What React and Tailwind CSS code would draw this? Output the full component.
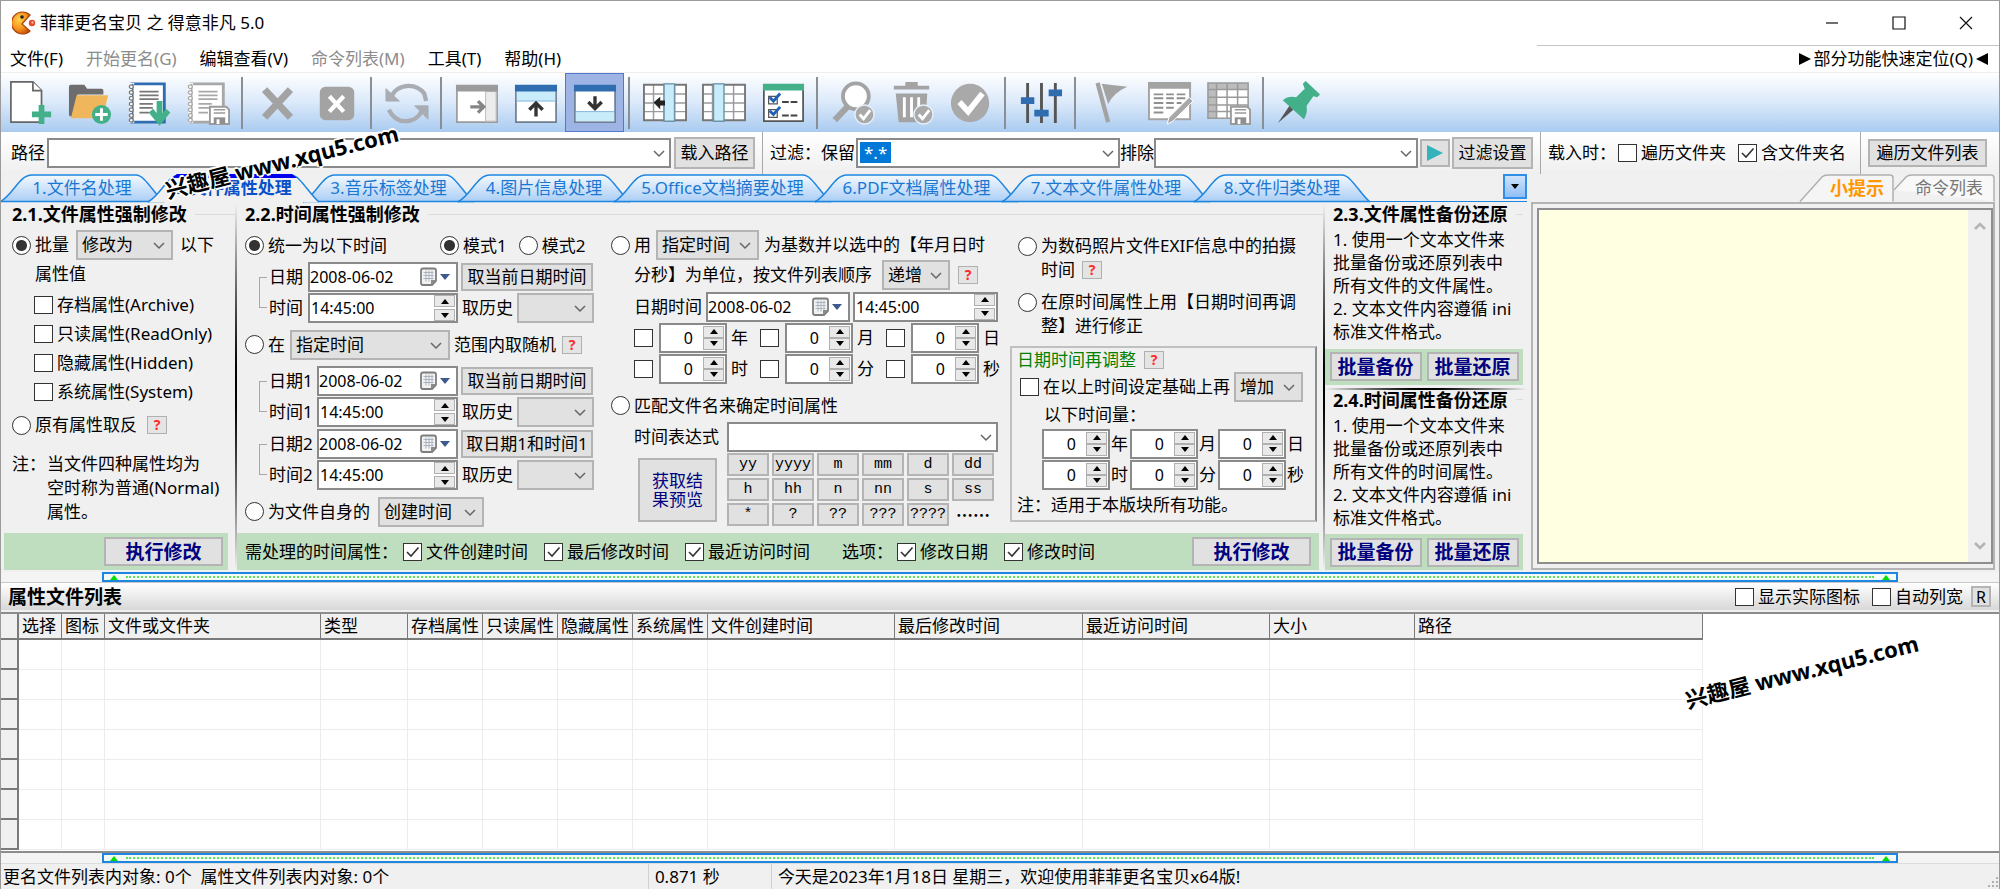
import { useId } from 'react';
import clsx from 'clsx';

/* ---------- small controls ---------- */

function Check({ label, checked = false, className }) {
  return (
    <label className={clsx('flex items-center gap-1 whitespace-nowrap', className)}>
      <span className="relative block h-[18px] w-[19px] shrink-0">
        <input
          type="checkbox"
          aria-label={label ? undefined : '启用'}
          defaultChecked={checked}
          className="peer block h-[18px] w-[19px] appearance-none border border-[#333] bg-white"
        />
        <svg viewBox="0 0 19 18" className="pointer-events-none absolute inset-0 hidden h-[18px] w-[19px] peer-checked:block" fill="none" stroke="#333" strokeWidth="1.6">
          <path d="M4 9l4 4 7.5-8.5" />
        </svg>
      </span>
      {label}
    </label>
  );
}

function Radio({ name, label, checked = false, className, top = false }) {
  return (
    <label className={clsx('flex gap-1 whitespace-nowrap', top ? 'items-start' : 'items-center', className)}>
      <input
        type="radio"
        name={name}
        defaultChecked={checked}
        className={clsx(
          'size-[19px] shrink-0 appearance-none rounded-full border border-[#333] bg-white checked:bg-[radial-gradient(circle,#333_5px,#fff_6px)]',
          top && 'mt-[3px]'
        )}
      />
      <span>{label}</span>
    </label>
  );
}

function Btn({ children, className }) {
  return (
    <button
      type="button"
      className={clsx('flex shrink-0 items-center justify-center border-2 border-[#b4b4b4] bg-[#e1e1e1] whitespace-nowrap', className)}
    >
      {children}
    </button>
  );
}

function Help() {
  return (
    <button
      type="button"
      className="flex h-[18px] w-5 shrink-0 items-center justify-center border border-[#b0b0b0] bg-[#e4e4e4] text-sm leading-4 font-bold text-[#ff2a2a]"
    >
      ?
    </button>
  );
}

function Chevron({ className }) {
  return (
    <svg viewBox="0 0 12 8" className={clsx('pointer-events-none absolute h-2 w-3', className)} fill="none" stroke="#666" strokeWidth="1.5">
      <path d="M1 1l5 5 5-5" />
    </svg>
  );
}

function Select({ value = '', label, className, arrow = 'right-2' }) {
  return (
    <span className={clsx('relative block h-[30px] shrink-0', className)}>
      <select aria-label={label ?? value} className="block h-full w-full appearance-none border-2 border-[#b4b4b4] bg-[#e1e1e1] pl-1 leading-5 text-black">
        <option>{value}</option>
      </select>
      <Chevron className={clsx('top-3', arrow)} />
    </span>
  );
}

function Combo({ label, className, children }) {
  return (
    <span className={clsx('relative block h-[30px]', className)}>
      <input type="text" aria-label={label} className="block h-full w-full border-2 border-[#8a8a8a] bg-white px-1" />
      {children}
      <Chevron className="top-3 right-[6px]" />
    </span>
  );
}

function Spinner({ className, gap = false }) {
  return (
    <span className={clsx('absolute flex flex-col', gap ? 'gap-[2px]' : '', className)}>
      {['增加', '减少'].map((n, i) => (
        <button key={n} type="button" aria-label={n} className="flex h-3 w-[21px] items-center justify-center border border-[#b0b0b0] bg-[#e9e9e9]">
          <svg viewBox="0 0 8 5" className="h-[5px] w-2" fill="#000">
            <path d={i === 0 ? 'M0 5L4 0L8 5Z' : 'M0 0L4 5L8 0Z'} />
          </svg>
        </button>
      ))}
    </span>
  );
}

function NumField({ label }) {
  return (
    <span className="relative block h-[30px] w-[68px] shrink-0">
      <input type="text" aria-label={label} defaultValue="0" className="block h-full w-full border-2 border-[#8a8a8a] bg-white pr-8 text-right text-base" />
      <Spinner className="top-[3px] right-[3px]" />
    </span>
  );
}

function DateField({ label, className }) {
  return (
    <span className={clsx('relative block h-[30px] shrink-0', className)}>
      <input type="text" aria-label={label} defaultValue="2008-06-02" className="block h-full w-full border-2 border-[#8a8a8a] bg-white text-base" />
      <svg viewBox="0 0 30 20" className="absolute top-[5px] right-2 h-5 w-[30px]">
        <path d="M3 1.500h11q2 0 2 2V14l-4 4H3q-2 0-2-2V3.500q0-2 2-2z" fill="#f2f2f2" stroke="#7d7d7d" strokeWidth="1.800" />
        <path d="M3.500 5.500h10M3.500 8.500h10M3.500 11.500h10M6 3.500v11M9 3.500v11M12 3.500v9" stroke="#a9b4c0" strokeWidth="1" />
        <path d="M11 18.500V13h5.500z" fill="#8a8a8a" />
        <path d="M20 7h10l-5 6z" fill="#3d5a8c" />
      </svg>
    </span>
  );
}

function TimeField({ label, className }) {
  return (
    <span className={clsx('relative block h-[30px] shrink-0', className)}>
      <input type="text" aria-label={label} defaultValue="14:45:00" className="block h-full w-full border-2 border-[#8a8a8a] bg-white pl-px text-base" />
      <Spinner gap className="top-[2px] right-[3px]" />
    </span>
  );
}

/* ---------- toolbar icons, all on a 46 x 46 grid ---------- */

const G = '#a3a3a3';

function Floppy() {
  return (
    <>
      <path d="M27 27h15l3 3v15H25V27z" fill="#fff" stroke="#9b9b9b" strokeWidth="2" />
      <path d="M29 30h12M29 33.500h12" stroke="#9b9b9b" strokeWidth="1.500" />
      <path d="M29 38h12v7H29z" fill="#8f8f8f" />
      <path d="M32 40h3v5h-3z" fill="#fff" />
    </>
  );
}

function Notebook({ cover, line }) {
  return (
    <>
      <path d="M5 3h34v40H5z" fill="#fff" stroke={cover} strokeWidth="3" />
      <path d="M5 2v42" stroke="#fff" strokeWidth="5" />
      <path d="M6 3v40" stroke={cover} strokeWidth="1.500" />
      {[6, 12, 18, 24, 30, 36, 41].map((y) => (
        <circle key={y} cx="4.500" cy={y} r="2" fill="#fff" stroke={line} strokeWidth="1.300" />
      ))}
      <path d="M13 11h20M13 15h20M13 19h20M13 24h14M13 28h14M13 33h10" stroke={line} strokeWidth="1.800" />
    </>
  );
}

function GridLines() {
  return (
    <>
      <path d="M1 4h44v37H1z" fill="#fff" />
      <path d="M1 13.500h44M1 23h44M1 32h44M11 4v37M22 4v37M33 4v37" stroke="#9a9a9a" strokeWidth="1.500" />
      <path d="M1 4h44v37H1z" fill="none" stroke="#777" strokeWidth="2" />
    </>
  );
}

function TickBadge() {
  return (
    <>
      <circle cx="35" cy="35" r="10" fill="#a9a9a9" stroke="#e6effa" strokeWidth="1.500" />
      <path d="M30 35l4 4.500 7-9" fill="none" stroke="#fff" strokeWidth="3" />
    </>
  );
}

const ICONS = {
  newFile: (
    <>
      <path d="M2 1h23l9 9v33H2z" fill="#fff" stroke="#666" strokeWidth="1.800" />
      <path d="M25 1v9h9" fill="#fff" stroke="#666" strokeWidth="1.800" />
      <path d="M34 25v20M24 35h20" stroke="#43b08a" strokeWidth="6" />
    </>
  ),
  addFolder: (
    <>
      <path d="M1 6q0-2 2-2h14l3 4h15q2 0 2 2v4H10L4 37H3q-2 0-2-2z" fill="#6d6d6d" />
      <path d="M9 15h33l-6 24H3z" fill="#f0b65c" />
      <circle cx="35" cy="35" r="10" fill="#43b08a" />
      <path d="M35 28.500v13M28.500 35h13" stroke="#fff" strokeWidth="3" />
    </>
  ),
  loadList: (
    <>
      <Notebook cover="#2f6db0" line="#777" />
      <path d="M34 21v20M25 31l9 11 9-11" fill="none" stroke="#43b08a" strokeWidth="6" />
    </>
  ),
  saveList: (
    <>
      <Notebook cover="#a8a8a8" line="#a8a8a8" />
      <Floppy />
    </>
  ),
  remove: <path d="M9 9l27 29M36 9L9 38" stroke={G} strokeWidth="7.500" />,
  removeAll: (
    <>
      <rect x="5" y="6" width="36" height="35" rx="6" fill={G} />
      <path d="M15 16l15 16M30 16L15 32" stroke="#fff" strokeWidth="4.500" />
    </>
  ),
  refresh: (
    <>
      <path d="M6 20C8 9 17 5 25 5q10 0 16 8l2 8" fill="none" stroke="#a9adb3" strokeWidth="4.500" />
      <path d="M1 8v13h14z" fill="#a9adb3" stroke="#a9adb3" />
      <path d="M40 27C37 38 29 42 21 42q-11 0-17-12" fill="none" stroke="#a9adb3" strokeWidth="4.500" />
      <path d="M45 40V26H31z" fill="#a9adb3" stroke="#a9adb3" />
    </>
  ),
  paneRight: (
    <>
      <path d="M2 5h42v38H2z" fill="#fff" stroke="#9b9b9b" strokeWidth="1.800" />
      <path d="M32 11h11v31H32z" fill="#ececec" stroke="#bbb" />
      <path d="M1 4h44v7H1z" fill="#9b9b9b" />
      <path d="M16 27h13M24 21l6 6-6 6" fill="none" stroke="#858585" strokeWidth="3.500" />
    </>
  ),
  paneUp: (
    <>
      <path d="M2 5h42v38H2z" fill="#fff" stroke="#6e7f92" strokeWidth="1.800" />
      <path d="M3 10h40v11H3z" fill="#c9ecfb" />
      <path d="M3 21h40" stroke="#7fb6dd" />
      <path d="M1 4h44v7H1z" fill="#2f6db0" />
      <path d="M23 24v13M16 30l7-7 7 7" fill="none" stroke="#333" strokeWidth="3.500" />
    </>
  ),
  paneDown: (
    <>
      <path d="M2 5h42v38H2z" fill="#fff" stroke="#6e7f92" strokeWidth="1.800" />
      <path d="M3 32h40v10H3z" fill="#c9ecfb" />
      <path d="M3 32h40" stroke="#7fb6dd" />
      <path d="M1 4h44v7H1z" fill="#2f6db0" />
      <path d="M23 16v12M16 22l7 7 7-7" fill="none" stroke="#333" strokeWidth="3.500" />
    </>
  ),
  gridInsert: (
    <>
      <GridLines />
      <path d="M22 3h11v39H22z" fill="#c9ecfb" stroke="#6c93a8" strokeWidth="1.500" />
      <path d="M11 22.500l7-6v4h5v5h-5v4z" fill="#222" />
    </>
  ),
  gridColumn: (
    <>
      <GridLines />
      <path d="M12 3h11v39H12z" fill="#c9ecfb" stroke="#6c93a8" strokeWidth="1.500" />
    </>
  ),
  checklist: (
    <>
      <path d="M3 4h41v38H3z" fill="#fff" stroke="#555" strokeWidth="1.800" />
      <path d="M2 3h43v7H2z" fill="#43b08a" />
      <path d="M8 16h9v8H8zM8 30h9v8H8z" fill="#fff" stroke="#555" strokeWidth="1.300" />
      <path d="M9 17l4 4 7-8M9 31l4 4 7-8" fill="none" stroke="#2160b8" strokeWidth="3" />
      <path d="M22 22h7M31 22h7M22 36h7M31 36h7" stroke="#444" strokeWidth="2" />
    </>
  ),
  search: (
    <>
      <circle cx="26" cy="16" r="13.500" fill="#fff" stroke="#a3a3a3" strokeWidth="4" />
      <path d="M17 27L4 41" stroke="#a3a3a3" strokeWidth="6.500" />
      <TickBadge />
    </>
  ),
  trash: (
    <>
      <path d="M4 5h12V1h13v4h12v4H4zM6 13h33l-2 30H9z" fill="#a3a3a3" />
      <path d="M15 17v21M22.500 17v21M30 17v21" stroke="#fff" strokeWidth="3" />
      <TickBadge />
    </>
  ),
  tick: (
    <>
      <circle cx="22" cy="23" r="20" fill="#a9a9a9" />
      <path d="M11 22l9 10 15-19" fill="none" stroke="#fff" strokeWidth="6" />
    </>
  ),
  sliders: (
    <>
      <path d="M9 2v42M23.500 2v42M38 2v42" stroke="#555" strokeWidth="3" />
      <path d="M2 17h14v7H2zM16 30h15v7H16zM31 9h14v7H31z" fill="#2f6db0" />
    </>
  ),
  flag: (
    <>
      <path d="M9 2l11 41" stroke={G} strokeWidth="4.500" />
      <path d="M13 3q8 1 27 3Q26 12 20 24L14 5z" fill={G} />
    </>
  ),
  editTable: (
    <>
      <path d="M1 3h43v37H1z" fill="#fff" stroke={G} strokeWidth="2" />
      <path d="M0 1h45v7H0z" fill={G} />
      <path d="M6 14h10M19 14h8M30 14h9M6 18h10M19 18h8M30 18h9M6 23h10M19 23h8M30 23h5M6 28h10M19 28h8M6 33h10" stroke="#8f8f8f" strokeWidth="2" />
      <path d="M43 17l4 4-21 21-6 3 2-7z" fill="#a8a8a8" stroke="#fff" strokeWidth="1" />
    </>
  ),
  saveTable: (
    <>
      <path d="M1 2h42v37H1z" fill="#fff" />
      <path d="M1 2h42v7H1zM1 2h9v37H1z" fill="#bcbcbc" />
      <path d="M1 2h42v37H1zM1 9h42M1 17h42M1 25h42M1 32h42M10 2v37M21 2v37M32 2v37" fill="none" stroke="#9a9a9a" strokeWidth="1.600" />
      <Floppy />
    </>
  ),
  pin: (
    <>
      <path d="M17 30L1 44l12-18z" fill="#555" />
      <path d="M30 0l15 14-3 3-4-1-7 10q1 9-3 14L6 20q6-5 14-3l9-9-2-5z" fill="#43b08a" />
    </>
  ),
};

const TOOL_GROUPS = [
  [['newFile', '新建'], ['addFolder', '添加文件夹'], ['loadList', '载入列表'], ['saveList', '保存列表']],
  [['remove', '移除'], ['removeAll', '全部移除']],
  [['refresh', '刷新']],
  [['paneRight', '右侧面板'], ['paneUp', '上方面板'], ['paneDown', '下方面板']],
  [['gridInsert', '插入列'], ['gridColumn', '列设置'], ['checklist', '选项']],
  [['search', '查找'], ['trash', '清理'], ['tick', '确认']],
  [['sliders', '设置']],
  [['flag', '标记'], ['editTable', '编辑表格'], ['saveTable', '保存表格']],
  [['pin', '固定']],
];

function Toolbar() {
  return (
    <div className="flex h-[60px] border-t border-[#eee] bg-linear-to-b from-white via-[#dbe9fa] to-[#a9cbf0]">
      {TOOL_GROUPS.map((group, i) => (
        <div key={i} className="flex">
          {i > 0 && <span className="mr-[5px] ml-1 mt-1 mb-[3px] w-[2px] bg-[#8a8f96]" />}
          {group.map(([icon, title]) => (
            <button
              key={icon}
              type="button"
              aria-label={title}
              className={clsx(
                'flex h-[59px] w-[59px] items-center justify-center',
                icon === 'paneDown' && 'border border-[#5478d0] bg-[#9db4e4]'
              )}
            >
              <svg viewBox="0 0 46 46" className="size-11 overflow-visible">
                {ICONS[icon]}
              </svg>
            </button>
          ))}
        </div>
      ))}
    </div>
  );
}

/* ---------- title and menu ---------- */

const MENUS = [
  ['文件(F)', false],
  ['开始更名(G)', true],
  ['编辑查看(V)', false],
  ['命令列表(M)', true],
  ['工具(T)', false],
  ['帮助(H)', false],
];

function TitleBar() {
  return (
    <header className="flex h-11 items-center pl-[11px]">
      <svg viewBox="0 0 24 24" className="mr-1 size-6">
        <defs>
          <radialGradient id="logo" cx="40%" cy="35%" r="70%">
            <stop offset="0" stopColor="#ffd34a" />
            <stop offset="0.600" stopColor="#f7931e" />
            <stop offset="1" stopColor="#c9500a" />
          </radialGradient>
        </defs>
        <path d="M18 4A11 11 0 1 0 18 20L10 13Z" fill="url(#logo)" stroke="#a8430a" strokeWidth="1.200" />
        <circle cx="10" cy="6" r="1.800" fill="#222" />
        <circle cx="20" cy="12" r="3.200" fill="#e2492f" />
        <circle cx="20.500" cy="11.500" r="1.200" fill="#f6b09c" />
      </svg>
      <h1 className="flex-1">菲菲更名宝贝 之 得意非凡 5.0</h1>
      <div className="flex">
        {['最小化', '最大化', '关闭'].map((n, i) => (
          <button key={n} type="button" aria-label={n} className="flex w-[67px] items-center justify-center">
            <svg viewBox="0 0 14 14" className="size-[14px]" fill="none" stroke="#111" strokeWidth="1.200">
              <path d={['M1 7h12', 'M1 1h12v12H1z', 'M1 1l12 12M13 1L1 13'][i]} />
            </svg>
          </button>
        ))}
      </div>
    </header>
  );
}

function MenuBar() {
  return (
    <nav className="flex h-[27px]">
      <div className="flex flex-1 items-center gap-[23px] pl-[9px]">
        {MENUS.map(([name, off]) => (
          <button key={name} type="button" className={off ? 'text-[#8c8c8c]' : 'text-black'}>
            {name}
          </button>
        ))}
      </div>
      <div className="flex w-[462px] items-center justify-end border-t border-[#c4c4c4] pr-[11px]">
        <button type="button" className="flex items-center gap-[3px]">
          <svg viewBox="0 0 12 12" className="size-3"><path d="M0 0l12 6L0 12z" /></svg>
          部分功能快速定位(Q)
          <svg viewBox="0 0 12 12" className="size-3"><path d="M12 0L0 6l12 6z" /></svg>
        </button>
      </div>
    </nav>
  );
}

/* ---------- path and filter row ---------- */

function FilterBar() {
  return (
    <div className="flex h-[42px] items-stretch bg-linear-to-b from-white to-[#efefef] pr-[12px]">
      <div className="flex flex-[624] items-center pl-[10px]">
        <span className="whitespace-nowrap">路径</span>
        <Combo label="路径" className="ml-[2px] flex-1" />
        <Btn className="ml-[3px] h-8 w-[81px]">载入路径</Btn>
      </div>
      <span className="mx-[7px] w-px bg-[#a8a8a8]" />
      <div className="flex flex-[640] items-center">
        <span className="whitespace-nowrap">过滤：保留</span>
        <Combo label="保留" className="ml-px flex-1">
          <span className="absolute top-1 left-1 flex h-[21px] items-center bg-[#0078d7] px-1 text-white">*.*</span>
        </Combo>
        <span className="whitespace-nowrap">排除</span>
        <Combo label="排除" className="flex-1" />
        <Btn className="ml-[2px] h-[28px] w-[30px]">
          <svg viewBox="0 0 16 16" className="size-4"><path d="M0 0l16 8-16 8z" fill="#35b3bd" /></svg>
        </Btn>
        <Btn className="ml-[2px] h-8 w-[81px]">过滤设置</Btn>
      </div>
      <span className="mx-[7px] w-px bg-[#a8a8a8]" />
      <div className="flex items-center">
        <span className="w-[70px] whitespace-nowrap">载入时：</span>
        <Check label="遍历文件夹" />
        <Check label="含文件夹名" checked className="ml-[12px]" />
      </div>
      <span className="mr-[7px] ml-[14px] w-px bg-[#a8a8a8]" />
      <div className="flex items-center">
        <Btn className="h-7 w-[119px]">遍历文件列表</Btn>
      </div>
    </div>
  );
}

/* ---------- tabs ---------- */

const TABS = [
  ['1.文件名处理', 'w-[148px]', 148],
  ['2.文件属性处理', 'w-[155px]', 155],
  ['3.音乐标签处理', 'w-[155px]', 155],
  ['4.图片信息处理', 'w-[156px]', 156],
  ['5.Office文档摘要处理', 'w-[201px]', 201],
  ['6.PDF文档属性处理', 'w-[187px]', 187],
  ['7.文本文件属性处理', 'w-[192px]', 192],
  ['8.文件归类处理', 'w-[160px]', 160],
];

function Tab({ name, width, w, active }) {
  const id = useId();
  const shape = `M-2 28C12 20 17 1 30 1H${w - 14}C${w - 5} 1 ${w + 4} 20 ${w + 14} 28`;
  return (
    <button
      type="button"
      role="tab"
      aria-selected={active}
      className={clsx(
        'relative flex h-7 shrink-0 items-center justify-center pl-3 whitespace-nowrap',
        width,
        active ? 'z-10 font-bold text-[#0a50c8]' : 'text-[#1a78d2]'
      )}
    >
      <svg viewBox={`0 0 ${w} 28`} className="absolute inset-0 h-7 w-full overflow-visible">
        <defs>
          <linearGradient id={id} x1="0" y1="0" x2="0" y2="1">
            <stop offset="0" stopColor={active ? '#f0f0f0' : '#f4f9fe'} />
            <stop offset="1" stopColor={active ? '#f0f0f0' : '#a9cdf5'} />
          </linearGradient>
        </defs>
        <path d={shape} fill={`url(#${id})`} stroke="#1e86e0" strokeWidth="1.500" />
        {active ? <path d={`M22 4L27 0H${w - 13}L${w - 8} 4z`} fill="#0000f0" /> : <path d={`M-2 27.500H${w + 14}`} stroke="#1e86e0" strokeWidth="1.500" />}
      </svg>
      <span className="relative">{name}</span>
    </button>
  );
}

function MainTabs() {
  return (
    <div role="tablist" className="flex h-7 shrink-0 border-b border-[#1e86e0] pl-px">
      {TABS.map(([name, width, w], i) => (
        <Tab key={name} name={name} width={width} w={w} active={i === 1} />
      ))}
      <button type="button" aria-label="更多标签" className="ml-auto flex h-[25px] w-6 items-center justify-center border-2 border-[#2f8fe6] bg-linear-to-b from-[#cfe3fb] to-[#8fbff5]">
        <svg viewBox="0 0 8 5" className="h-[5px] w-2"><path d="M0 0h8L4 5z" /></svg>
      </button>
    </div>
  );
}

/* ---------- attribute panels ---------- */

function Heading({ children, className }) {
  return (
    <h2 className={clsx('flex h-5 items-center gap-2 pl-2 text-lg leading-5 font-bold whitespace-nowrap', className)}>
      {children}
      <span className="h-px flex-1 bg-[#dcdcdc]" />
    </h2>
  );
}

function AttributePanel() {
  return (
    <section className="flex w-[234px] shrink-0 flex-col pl-[3px]">
      <Heading>2.1.文件属性强制修改</Heading>
      <div className="mt-[6px] flex h-[30px] items-center pl-2">
        <Radio name="attr" label="批量" checked />
        <Select value="修改为" className="ml-[7px] w-[97px]" />
        <span className="ml-[7px]">以下</span>
      </div>
      <div className="flex h-7 items-center pl-[31px]">属性值</div>
      <div className="mt-[2px] flex flex-col pl-[30px]">
        {['存档属性(Archive)', '只读属性(ReadOnly)', '隐藏属性(Hidden)', '系统属性(System)'].map((n) => (
          <Check key={n} label={n} className="h-[29px]" />
        ))}
      </div>
      <div className="mt-1 flex h-[30px] items-center gap-[10px] pl-2">
        <Radio name="attr" label="原有属性取反" />
        <Help />
      </div>
      <p className="mt-3 flex pl-2 leading-6">
        <span className="w-[35px] shrink-0">注：</span>
        <span className="whitespace-nowrap">
          当文件四种属性均为
          <br />
          空时称为普通(Normal)
          <br />
          属性。
        </span>
      </p>
      <div className="mt-auto mr-[7px] flex h-[37px] items-center justify-end bg-[#bfdec0] pr-[5px]">
        <Btn className="h-[29px] w-[119px] text-[19px] font-bold text-[#000080]">执行修改</Btn>
      </div>
    </section>
  );
}

function DateTimePair({ suffix = '', wide, action }) {
  return (
    <div className="relative flex flex-col pl-6">
      <span className="absolute top-4 left-[14px] h-[31px] w-2 border border-r-0 border-[#a8a8a8]" />
      <div className="flex h-[31px] items-center">
        <span className={wide ? 'w-[39px]' : 'w-12'}>日期{suffix}</span>
        <DateField label={`日期${suffix}`} className={wide ? 'w-[150px]' : 'w-[141px]'} />
        <Btn className="ml-[3px] h-7 w-[132px]">{action}</Btn>
      </div>
      <div className="flex h-8 items-center">
        <span className={wide ? 'w-[39px]' : 'w-12'}>时间{suffix}</span>
        <TimeField label={`时间${suffix}`} className={wide ? 'w-[150px]' : 'w-[141px]'} />
        <span className="ml-1 w-[55px]">取历史</span>
        <Select label="取历史" className="w-[77px]" />
      </div>
    </div>
  );
}

function FixedTimeColumn() {
  return (
    <div className="flex w-[366px] shrink-0 flex-col">
      <div className="flex h-[31px] items-center">
        <Radio name="time" label="统一为以下时间" checked />
        <Radio name="mode" label="模式1" checked className="ml-[53px]" />
        <Radio name="mode" label="模式2" className="ml-[12px]" />
      </div>
      <DateTimePair wide action="取当前日期时间" />
      <div className="my-[5px] flex h-[31px] items-center">
        <Radio name="time" label="在" />
        <Select value="指定时间" className="ml-[5px] w-[160px]" />
        <span className="mr-[6px] ml-1 whitespace-nowrap">范围内取随机</span>
        <Help />
      </div>
      <DateTimePair suffix="1" action="取当前日期时间" />
      <DateTimePair suffix="2" action="取日期1和时间1" />
      <div className="mt-[5px] flex h-[31px] items-center">
        <Radio name="time" label="为文件自身的" />
        <Select value="创建时间" className="ml-2 w-[106px]" />
      </div>
    </div>
  );
}

const KEYS = ['yy', 'yyyy', 'm', 'mm', 'd', 'dd', 'h', 'hh', 'n', 'nn', 's', 'ss', '*', '?', '??', '???', '????'];

function StepTimeColumn() {
  return (
    <div className="flex w-[407px] shrink-0 flex-col">
      <div className="flex h-[30px] items-center">
        <Radio name="time" label="用" />
        <Select value="指定时间" className="mx-[5px] w-[103px]" />
        <span className="whitespace-nowrap">为基数并以选中的【年月日时</span>
      </div>
      <div className="flex h-[29px] items-center pl-[23px]">
        <span className="whitespace-nowrap">分秒】为单位，按文件列表顺序</span>
        <Select value="递增" className="mr-2 ml-[10px] w-[68px]" />
        <Help />
      </div>
      <div className="mt-[2px] flex h-[31px] items-center pl-[23px]">
        <span className="w-[72px]">日期时间</span>
        <DateField label="日期时间" className="w-[144px]" />
        <TimeField label="时间" className="ml-[3px] w-[145px]" />
      </div>
      {['年月日', '时分秒'].map((row) => (
        <div key={row} className="flex h-[31px] items-center pl-[23px]">
          {row.split('').map((u) => (
            <span key={u} className="flex w-[126px] items-center">
              <Check className="mr-[6px]" />
              <NumField label={u} />
              <span className="ml-1">{u}</span>
            </span>
          ))}
        </div>
      ))}
      <div className="mt-[6px] flex h-[31px] items-center">
        <Radio name="time" label="匹配文件名来确定时间属性" />
      </div>
      <div className="flex h-[31px] items-center pl-[23px]">
        <span className="w-[93px]">时间表达式</span>
        <Combo label="时间表达式" className="w-[271px]" />
      </div>
      <div className="mt-px flex pl-[27px]">
        <Btn className="mt-[5px] h-[64px] w-[79px] leading-[19px] text-[#000080]">
          获取结
          <br />
          果预览
        </Btn>
        <div className="ml-[10px] grid grid-cols-6 gap-x-[3px] gap-y-[2px] font-['Liberation_Mono',monospace] text-[15px]">
          {KEYS.map((k) => (
            <Btn key={k} className="h-[23px] w-[42px] border leading-4">
              {k}
            </Btn>
          ))}
          <span className="flex items-center justify-center font-['Noto_Sans_CJK_SC',sans-serif] text-[17px] font-bold">……</span>
        </div>
      </div>
    </div>
  );
}

function PhotoTimeColumn() {
  return (
    <div className="flex flex-1 flex-col leading-6">
      <Radio
        top
        name="time"
        className="mt-1"
        label={
          <>
            为数码照片文件EXIF信息中的拍摄
            <span className="flex items-center gap-[7px]">
              时间
              <Help />
            </span>
          </>
        }
      />
      <Radio
        top
        name="time"
        className="mt-2"
        label={
          <>
            在原时间属性上用【日期时间再调
            <br />
            整】进行修正
          </>
        }
      />
      <div className="mt-2 mr-[6px] -ml-2 border-2 border-[#c0c0c0] border-r-[#8e8e8e] pl-2">
        <div className="-ml-[3px] flex items-center gap-2 text-[#008000]">
          日期时间再调整
          <Help />
        </div>
        <div className="flex h-[30px] items-center">
          <Check label="在以上时间设定基础上再" />
          <Select value="增加" className="ml-[4px] w-[69px]" />
        </div>
        <div className="flex h-[26px] items-center pl-[24px]">以下时间量：</div>
        {['年月日', '时分秒'].map((row) => (
          <div key={row} className="flex h-[31px] items-center pl-[22px]">
            {row.split('').map((u) => (
              <span key={u} className="flex w-[88px] items-center gap-px">
                <NumField label={`调整${u}`} />
                {u}
              </span>
            ))}
          </div>
        ))}
        <div className="my-[3px] -ml-[3px]">注：适用于本版块所有功能。</div>
      </div>
    </div>
  );
}

function TimePanel() {
  return (
    <section className="flex w-[1086px] shrink-0 flex-col">
      <Heading>2.2.时间属性强制修改</Heading>
      <div className="mt-[6px] flex pl-2">
        <FixedTimeColumn />
        <StepTimeColumn />
        <PhotoTimeColumn />
      </div>
      <div className="mt-auto mr-1 flex h-[37px] items-center bg-[#bfdec0] pr-2 pl-2">
        <span className="mr-[5px] w-[153px] whitespace-nowrap">需处理的时间属性：</span>
        <Check label="文件创建时间" checked />
        <Check label="最后修改时间" checked className="ml-4" />
        <Check label="最近访问时间" checked className="ml-4" />
        <span className="ml-8 w-[55px] whitespace-nowrap">选项：</span>
        <Check label="修改日期" checked />
        <Check label="修改时间" checked className="ml-4" />
        <Btn className="ml-auto h-[29px] w-[119px] text-[19px] font-bold text-[#000080]">执行修改</Btn>
      </div>
    </section>
  );
}

function BackupPanel({ title, kind }) {
  return (
    <section className="flex flex-1 flex-col">
      <Heading className="mr-1">{title}</Heading>
      <p className="mt-1 pl-2 leading-[23px] whitespace-nowrap">
        1. 使用一个文本文件来
        <br />
        批量备份或还原列表中
        <br />
        所有文件的{kind}属性。
        <br />
        2. 文本文件内容遵循 ini
        <br />
        标准文件格式。
      </p>
      <div className="mt-auto mr-1 flex h-[36px] items-center justify-center gap-[5px] bg-[#bfdec0] text-[19px] font-bold text-[#000080]">
        <Btn className="h-[29px] w-[92px]">批量备份</Btn>
        <Btn className="h-[29px] w-[92px]">批量还原</Btn>
      </div>
    </section>
  );
}

function TipsPanel() {
  return (
    <aside className="flex min-w-0 flex-1 flex-col">
      <div role="tablist" className="flex h-7 justify-end">
        <button type="button" role="tab" aria-selected="true" className="relative z-10 flex w-[94px] items-center justify-end pr-[10px] text-lg font-bold text-[#ff9800]">
          <svg viewBox="0 0 94 28" className="absolute inset-0 h-7 w-[94px] overflow-visible">
            <path d="M0 27.500L22 3Q24 1 28 1H90Q93 1 93 4V27.500" fill="#f5f5f5" stroke="#b0b0b0" strokeWidth="1.500" />
          </svg>
          <span className="relative">小提示</span>
        </button>
        <button type="button" role="tab" aria-selected="false" className="relative flex w-[101px] items-center justify-end pr-3 text-[#777]">
          <svg viewBox="0 0 101 28" className="absolute inset-0 h-7 w-[101px]">
            <path d="M0 16L12 3Q14 1 18 1H97Q100 1 100 4V27.500" fill="#f8f8f8" stroke="#b0b0b0" strokeWidth="1.500" />
          </svg>
          <span className="relative">命令列表</span>
        </button>
      </div>
      <div className="flex flex-1 border-2 border-[#b4b4b4] p-[4px] pr-0">
        <div className="flex flex-1 border-2 border-[#8e8e8e] bg-[#ffffe1]">
          <div className="flex-1" />
          <div className="flex w-[23px] flex-col items-center justify-between bg-[#f0f0f0] py-3">
            <svg viewBox="0 0 12 8" className="h-2 w-3" fill="none" stroke="#b4b4b4" strokeWidth="2.500"><path d="M1 7l5-5 5 5" /></svg>
            <svg viewBox="0 0 12 8" className="h-2 w-3" fill="none" stroke="#b4b4b4" strokeWidth="2.500"><path d="M1 1l5 5 5-5" /></svg>
          </div>
        </div>
      </div>
    </aside>
  );
}

/* ---------- list ---------- */

function Splitter() {
  return (
    <div className="bg-[#f4f4f4] pr-[101px] pl-[101px]">
      <div className="flex h-[10px] items-center gap-2 border-2 border-[#1e86e0] bg-[#f4fbf4] px-[6px]">
        <svg viewBox="0 0 8 5" className="h-[5px] w-2"><path d="M0 5L4 0l4 5z" fill="#00e000" /></svg>
        <span className="flex-1 border-t-2 border-dotted border-[#5fe05f]" />
        <svg viewBox="0 0 8 5" className="h-[5px] w-2"><path d="M0 5L4 0l4 5z" fill="#00e000" /></svg>
      </div>
    </div>
  );
}

const COLUMNS = [
  ['选择', 'w-[43px]'],
  ['图标', 'w-[43px]'],
  ['文件或文件夹', 'w-[216px]'],
  ['类型', 'w-[87px]'],
  ['存档属性', 'w-[75px]'],
  ['只读属性', 'w-[75px]'],
  ['隐藏属性', 'w-[75px]'],
  ['系统属性', 'w-[75px]'],
  ['文件创建时间', 'w-[187px]'],
  ['最后修改时间', 'w-[188px]'],
  ['最近访问时间', 'w-[187px]'],
  ['大小', 'w-[145px]'],
  ['路径', 'w-[288px]'],
];

function FileList() {
  return (
    <div className="border-y-2 border-[#8c8c8c] bg-white pb-px">
      <table className="table-fixed border-separate border-spacing-0">
        <thead>
          <tr className="h-[26px]">
            <th className="w-[18px] border-r-2 border-b-2 border-[#7a7a7a] bg-[#f0f0f0]" />
            {COLUMNS.map(([name, w]) => (
              <th key={name} className={clsx('border-r border-b-2 border-[#7a7a7a] bg-[#f0f0f0] p-0 pl-[3px] text-left leading-5 font-normal whitespace-nowrap', w)}>
                {name}
              </th>
            ))}
          </tr>
        </thead>
        <tbody>
          {Array.from({ length: 7 }, (_, i) => (
            <tr key={i} className="h-[30px]">
              <td className="border-r-2 border-b-2 border-[#7a7a7a] bg-[#f0f0f0] p-0" />
              {COLUMNS.map(([name]) => (
                <td key={name} className="border-r border-b border-[#ececec] p-0" />
              ))}
            </tr>
          ))}
        </tbody>
      </table>
    </div>
  );
}

function Watermark({ className }) {
  return (
    <div
      className={clsx(
        "pointer-events-none absolute z-20 -rotate-14 text-[22px] leading-8 font-bold whitespace-nowrap text-black [text-shadow:2px_0_#fff,-2px_0_#fff,0_2px_#fff,0_-2px_#fff,1px_1px_#fff,-1px_-1px_#fff]",
        className
      )}
    >
      兴趣屋 www.xqu5.com
    </div>
  );
}

export default function App() {
  return (
    <div className="relative overflow-hidden border-x border-t border-[#9a9a9a] bg-[#f0f0f0] font-['Noto_Sans','Noto_Sans_CJK_SC',sans-serif] text-[17px] leading-5 text-black">
      <div className="bg-white">
        <TitleBar />
        <MenuBar />
      </div>
      <Toolbar />
      <FilterBar />

      <main className="flex pr-1">
        <div className="flex shrink-0 flex-col">
          <MainTabs />
          <div className="flex h-[368px] pt-[2px]">
            <AttributePanel />
            <span className="w-[2px] bg-linear-to-b from-[#f0f0f0] via-black to-[#f0f0f0]" />
            <TimePanel />
            <span className="w-[2px] bg-linear-to-b from-[#f0f0f0] via-black to-[#f0f0f0]" />
            <div className="flex w-[202px] flex-col">
              <BackupPanel title="2.3.文件属性备份还原" kind="文件" />
              <span className="mt-[3px] h-[2px] bg-linear-to-r from-[#f0f0f0] via-black to-[#f0f0f0]" />
              <BackupPanel title="2.4.时间属性备份还原" kind="时间" />
            </div>
          </div>
        </div>
        <span className="w-1" />
        <TipsPanel />
      </main>

      <div className="pt-[2px]">
        <Splitter />
      </div>
      <div className="flex h-[28px] items-center border-t border-[#c8c8c8] bg-linear-to-b from-white to-[#d8d8d8] pr-2 pl-[7px]">
        <h2 className="flex-1 text-[19px] font-bold">属性文件列表</h2>
        <Check label="显示实际图标" />
        <Check label="自动列宽" className="ml-[12px]" />
        <Btn className="ml-2 h-[21px] w-5 border text-base">R</Btn>
      </div>
      <div className="h-[2px]" />
      <FileList />
      <Splitter />

      <footer className="flex h-[27px] items-center border-t border-[#dcdcdc]">
        <span className="flex-[648] pl-[2px] whitespace-pre">更名文件列表内对象: 0个  属性文件列表内对象: 0个</span>
        <span className="h-full w-px bg-[#d0d0d0]" />
        <span className="w-[122px] pl-[6px]">0.871 秒</span>
        <span className="h-full w-px bg-[#d0d0d0]" />
        <span className="flex-[1215] pl-[6px]">今天是2023年1月18日 星期三，欢迎使用菲菲更名宝贝x64版!</span>
        <svg viewBox="0 0 12 12" className="mt-3 h-3 w-3" fill="#b0b0b0">
          <path d="M9 0h2v2H9zM9 4h2v2H9zM5 4h2v2H5zM9 8h2v2H9zM5 8h2v2H5zM1 8h2v2H1z" />
        </svg>
      </footer>

      <Watermark className="top-[144px] left-[161px]" />
      <Watermark className="top-[654px] left-[1681px]" />
    </div>
  );
}
